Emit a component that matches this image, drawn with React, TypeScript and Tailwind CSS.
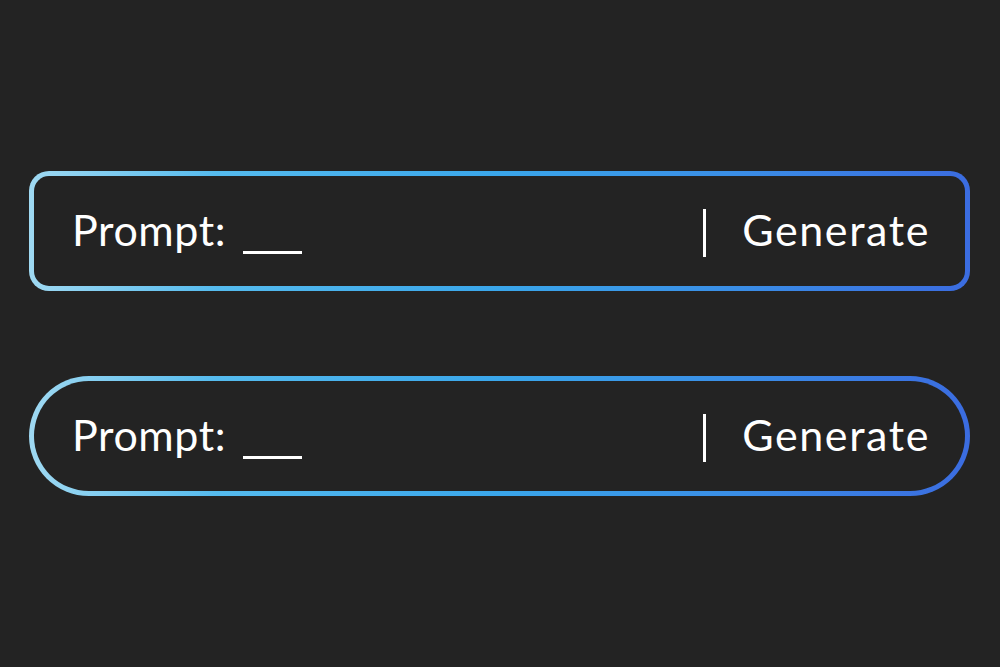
import React from "react"

function PromptBar({ pill }: { pill?: boolean }) {
  return (
    <div
      className={`w-[941px] h-[120px] p-[5px] bg-[linear-gradient(90deg,#9fd9f2_0%,#55bbee_20%,#3aa6ea_50%,#3a8ee6_75%,#3b6ce0_100%)] ${pill ? "rounded-full" : "rounded-[20px]"}`}
    >
      <div
        className={`h-full w-full bg-[#232323] flex items-center pl-[38px] pr-[35px] pb-[3px] ${pill ? "rounded-full" : "rounded-[15px]"}`}
      >
        <span className="text-[43px] text-white font-normal tracking-[0.6px] leading-none">Prompt:</span>
        <span className="inline-block w-[59px] h-[3px] bg-white ml-[17px] mt-[46px]" />
        <div className="flex-1" />
        <div className="w-[3px] h-[48px] bg-white mr-[36px] mt-[6px]" />
        <span className="text-[43px] text-white font-normal tracking-[1.6px] leading-none">Generate</span>
      </div>
    </div>
  )
}

export default function App() {
  return (
    <div
      className="w-[1000px] h-[667px] bg-[#232323] flex flex-col pl-[29px] pt-[171px] gap-[85px]"
      style={{ fontFamily: "Lato, 'Open Sans', sans-serif" }}
    >
      <PromptBar />
      <PromptBar pill />
    </div>
  )
}
